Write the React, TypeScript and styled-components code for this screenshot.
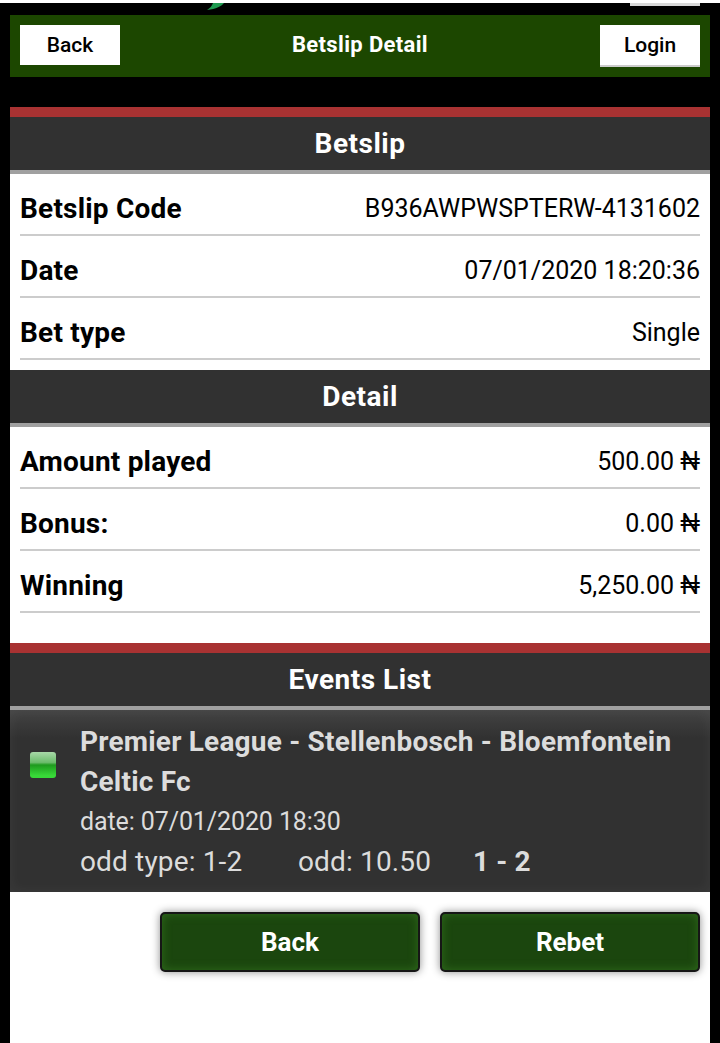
import styled, { createGlobalStyle } from "styled-components";

type Row = {
  label: string;
  value: string;
};

const betslipRows: Row[] = [
  { label: "Betslip Code", value: "B936AWPWSPTERW-4131602" },
  { label: "Date", value: "07/01/2020 18:20:36" },
  { label: "Bet type", value: "Single" },
];

const detailRows: Row[] = [
  { label: "Amount played", value: "500.00 ₦" },
  { label: "Bonus:", value: "0.00 ₦" },
  { label: "Winning", value: "5,250.00 ₦" },
];

const InfoRows = ({ rows }: { rows: Row[] }) => (
  <Rows>
    {rows.map((row) => (
      <InfoRow key={row.label}>
        <Label>{row.label}</Label>
        <Value>{row.value}</Value>
      </InfoRow>
    ))}
  </Rows>
);

const App = () => {
  return (
    <>
      <GlobalStyle />
      <Page>
        <LogoStrip>
          <LogoTail viewBox="0 0 17 7" aria-hidden="true">
            <path d="M6 0H17C15 3 9 6 0 7C3 5 5 3 6 0Z" fill="#1f9a50" />
          </LogoTail>
          <StripTab />
        </LogoStrip>
        <Header>
          <HeaderButton>Back</HeaderButton>
          <HeaderTitle>Betslip Detail</HeaderTitle>
          <HeaderButton $raised>Login</HeaderButton>
        </Header>
        <Content>
          <SectionHead $accent>Betslip</SectionHead>
          <InfoRows rows={betslipRows} />
          <SectionHead>Detail</SectionHead>
          <InfoRows rows={detailRows} />
          <Spacer />
          <SectionHead $accent>Events List</SectionHead>
          <EventCard>
            <StatusLight />
            <EventBody>
              <EventTitle>Premier League - Stellenbosch - Bloemfontein Celtic Fc</EventTitle>
              <EventMeta>date: 07/01/2020 18:30</EventMeta>
              <OddsLine>
                <OddType>odd type: 1-2</OddType>
                <OddValue>odd: 10.50</OddValue>
                <Score>1 - 2</Score>
              </OddsLine>
            </EventBody>
          </EventCard>
          <Actions>
            <ActionButton>Back</ActionButton>
            <ActionButton>Rebet</ActionButton>
          </Actions>
        </Content>
      </Page>
    </>
  );
};

const GlobalStyle = createGlobalStyle`
  html, body {
    margin: 0;
    padding: 0;
    background: #000;
  }
  * {
    box-sizing: border-box;
  }
`;

const Page = styled.div`
  width: 720px;
  height: 1043px;
  overflow: hidden;
  padding: 0 10px;
  background: #000;
  font-family: Roboto, "Liberation Sans", sans-serif;
`;

const LogoStrip = styled.div`
  height: 15px;
  margin: 0 -10px;
  padding: 3px 20px 0 207px;
  display: flex;
  justify-content: space-between;
  align-items: flex-start;
  background: linear-gradient(#fff 3px, #000 3px);
`;

const LogoTail = styled.svg`
  width: 17px;
  height: 7px;
`;

const StripTab = styled.div`
  width: 70px;
  height: 3px;
  background: #d8d8d8;
`;

const Header = styled.header`
  height: 62px;
  padding: 10px 10px 0;
  display: flex;
  justify-content: space-between;
  align-items: flex-start;
  background: #1c4700;
`;

const HeaderButton = styled.div<{ $raised?: boolean }>`
  width: 100px;
  height: ${({ $raised }) => ($raised ? "42px" : "40px")};
  display: flex;
  align-items: center;
  justify-content: center;
  background: #fff;
  border-bottom: ${({ $raised }) => ($raised ? "2px solid #ccc" : "none")};
  color: #000;
  font-size: 21px;
  font-weight: 500;
`;

const HeaderTitle = styled.h1`
  margin: 0;
  height: 40px;
  line-height: 40px;
  color: #fff;
  font-size: 22px;
  font-weight: 700;
  letter-spacing: 0.35px;
`;

const Content = styled.main`
  margin-top: 30px;
  height: 936px;
  background: #fff;
`;

const SectionHead = styled.h2<{ $accent?: boolean }>`
  margin: 0;
  height: ${({ $accent }) => ($accent ? "67px" : "57px")};
  display: flex;
  align-items: center;
  justify-content: center;
  background: #313131;
  border-top: ${({ $accent }) => ($accent ? "10px solid #a83232" : "none")};
  border-bottom: 4px solid #a0a0a0;
  color: #fff;
  font-size: 28px;
  font-weight: 700;
  letter-spacing: 0.5px;
`;

const Rows = styled.div`
  padding: 0 10px 10px;
`;

const InfoRow = styled.div`
  height: 62px;
  padding-top: 8px;
  display: flex;
  justify-content: space-between;
  align-items: center;
  border-bottom: 2px solid #ccc;
  color: #000;
`;

const Label = styled.span`
  font-size: 28px;
  font-weight: 700;
  letter-spacing: 0.2px;
`;

const Value = styled.span`
  font-size: 25px;
  font-weight: 400;
`;

const Spacer = styled.div`
  height: 20px;
`;

const EventCard = styled.section`
  height: 182px;
  padding: 12px 20px 0;
  display: flex;
  align-items: flex-start;
  background: linear-gradient(#434343 0, #313131 28px);
  box-shadow: inset 0 0 14px rgba(255, 255, 255, 0.05);
`;

const StatusLight = styled.span`
  flex: none;
  width: 26px;
  height: 26px;
  margin-top: 30px;
  margin-right: 24px;
  border-radius: 3px;
  background: linear-gradient(#a8d8a8 0, #6cbc6c 40%, #1e9a1e 50%, #38d838 90%);
`;

const EventBody = styled.div`
  flex: 1;
  color: #dcdcdc;
`;

const EventTitle = styled.div`
  font-size: 28px;
  font-weight: 700;
  line-height: 40px;
  letter-spacing: 0.2px;
`;

const EventMeta = styled.div`
  font-size: 25px;
  line-height: 40px;
  letter-spacing: -0.1px;
`;

const OddsLine = styled.div`
  display: flex;
  font-size: 28px;
  line-height: 39px;
  letter-spacing: 0.15px;
`;

const OddType = styled.span`
  width: 218px;
`;

const OddValue = styled.span`
  width: 175px;
`;

const Score = styled.span`
  font-weight: 700;
`;

const Actions = styled.div`
  padding: 20px 10px 0 0;
  display: flex;
  justify-content: flex-end;
  gap: 20px;
`;

const ActionButton = styled.button`
  width: 260px;
  height: 60px;
  padding: 0;
  background: #1b460e;
  border: 2px solid #161616;
  border-radius: 5px;
  box-shadow: 0 0 8px rgba(0, 0, 0, 0.45), inset 0 0 10px #2f6a1c;
  color: #fff;
  font-family: inherit;
  font-size: 26px;
  font-weight: 700;
`;

export default App;
